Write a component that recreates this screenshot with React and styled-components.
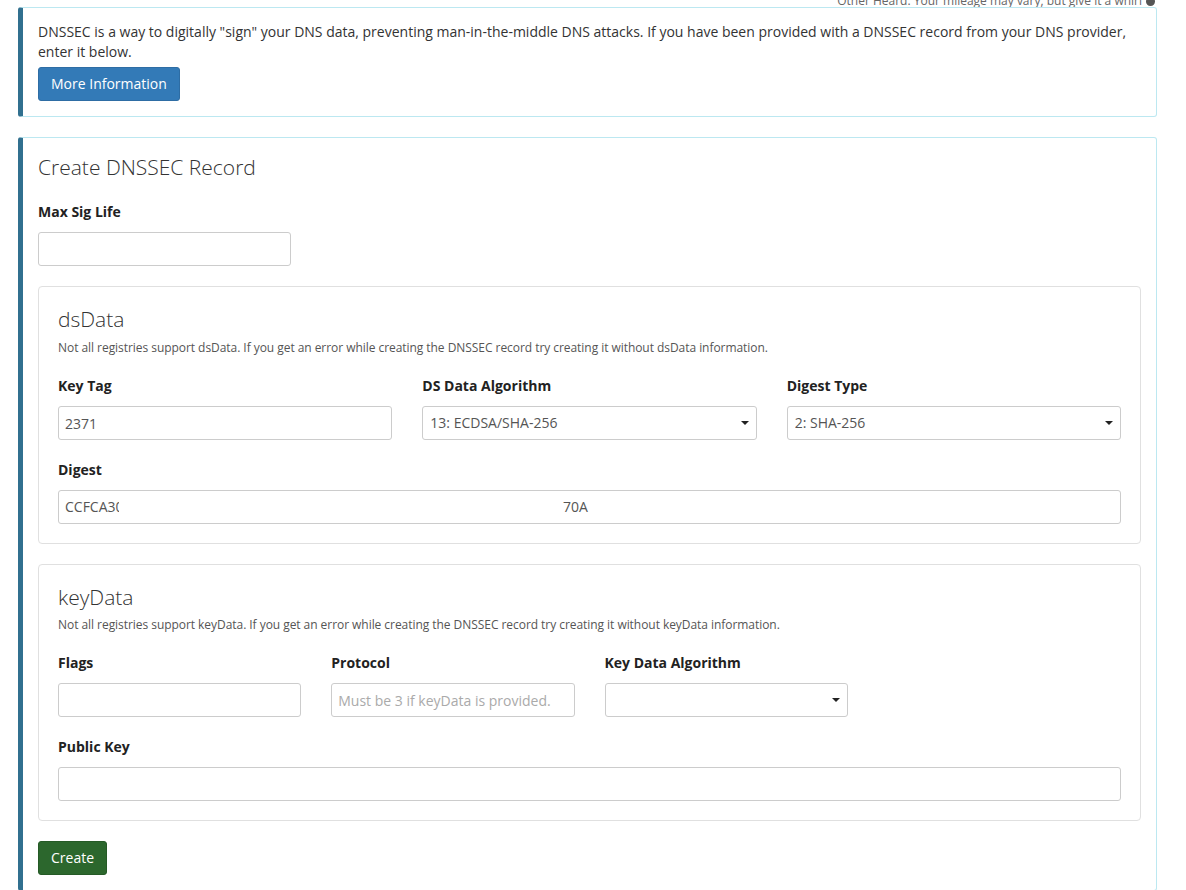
import React from "react";
import styled, { createGlobalStyle } from "styled-components";

const Global = createGlobalStyle`
  html, body { margin: 0; padding: 0; background: #fff; }
  body {
    font-family: "Open Sans", "Liberation Sans", Arial, sans-serif;
    font-size: 14px;
    line-height: 20px;
    color: #333;
  }
  * { box-sizing: border-box; }
`;

const Page = styled.div`
  padding: 0 29px 20px 18px;
`;

const TopLine = styled.div`
  height: 7px;
  overflow: hidden;
  display: flex;
  justify-content: flex-end;
  align-items: flex-end;
  padding-right: 2px;
`;

const TopNote = styled.span`
  font-size: 12px;
  line-height: 18px;
  color: #666;
  margin-bottom: -3px;
  display: inline-flex;
  align-items: center;
  gap: 4px;
`;

const Smile = styled.span`
  display: inline-block;
  width: 9px;
  height: 9px;
  border-radius: 50%;
  background: #555;
`;

const InfoPanel = styled.div`
  border: 1px solid #bce8f1;
  border-left: 5px solid #31708f;
  border-radius: 3px;
  padding: ${(p) => (p.$main ? "15px" : "14px 15px 15px")};
  margin-bottom: 20px;
  background: #fff;
`;

const Paragraph = styled.p`
  margin: 0 0 5px 0;
`;

const Button = styled.button`
  display: inline-block;
  font-family: inherit;
  font-size: 14px;
  line-height: 20px;
  padding: 6px 12px;
  border-radius: 3px;
  border: 1px solid ${(p) => (p.$variant === "success" ? "#255a26" : "#2e6da4")};
  background: ${(p) => (p.$variant === "success" ? "#2c672d" : "#337ab7")};
  color: #fff;
  cursor: pointer;
`;

const Title = styled.h3`
  margin: 0 0 21px 0;
  font-size: 21px;
  line-height: 28px;
  font-weight: 300;
  color: #333;
`;

const WellTitle = styled.h4`
  font-size: 21px;
  line-height: 26px;
  font-weight: 300;
  color: #333;
  margin: 0 0 ${(p) => (p.$tight ? "6px" : "7px")} 0;
`;

const Help = styled.p`
  margin: 0 0 20px 0;
  font-size: 12px;
  line-height: 17px;
  letter-spacing: -0.05px;
  color: #555;
`;

const Well = styled.div`
  border: 1px solid #e0e0e0;
  border-radius: 4px;
  padding: 19px;
  margin-bottom: 20px;
  background: #fff;
`;

const Grid = styled.div`
  display: grid;
  grid-template-columns: repeat(${(p) => p.$cols}, 1fr);
  column-gap: 30px;
  margin-bottom: ${(p) => (p.$last ? "0" : "20px")};
`;

const Field = styled.div`
  display: flex;
  flex-direction: column;
`;

const Label = styled.label`
  font-weight: 700;
  font-size: 14px;
  line-height: 20px;
  margin-bottom: 10px;
  color: #222;
`;

const inputBase = `
  height: 34px;
  width: 100%;
  border: 1px solid #ccc;
  border-radius: 3px;
  padding: 6px 6px;
  font-family: "Open Sans", "Liberation Sans", Arial, sans-serif;
  font-size: 14px;
  line-height: 20px;
  color: #555;
  background: #fff;
  outline: none;
`;

const Input = styled.input`
  ${inputBase}
  &::placeholder { color: #aaa; }
`;

const FakeInput = styled.div`
  ${inputBase}
  display: flex;
  align-items: center;
  white-space: nowrap;
  overflow: hidden;
`;

const Clip = styled.span`
  display: inline-block;
  width: ${(p) => p.$w}px;
  overflow: hidden;
  flex: none;
`;

const Tail = styled.span`
  margin-left: ${(p) => p.$gap}px;
`;

const SelectWrap = styled.div`
  position: relative;
  &::after {
    content: "";
    position: absolute;
    right: 8px;
    top: 15px;
    border-left: 4px solid transparent;
    border-right: 4px solid transparent;
    border-top: 4px solid #222;
    pointer-events: none;
  }
`;

const Select = styled.select`
  ${inputBase}
  padding: 6px 7px;
  appearance: none;
  -webkit-appearance: none;
`;

export default function App() {
  return (
    <>
      <Global />
      <Page>
        <TopLine>
          <TopNote>
            Other Heard. Your mileage may vary, but give it a whirl <Smile />
          </TopNote>
        </TopLine>
        <InfoPanel>
          <Paragraph>
            DNSSEC is a way to digitally "sign" your DNS data, preventing man-in-the-middle DNS attacks. If you have been provided with a DNSSEC record from your DNS provider, enter it below.
          </Paragraph>
          <Button type="button">More Information</Button>
        </InfoPanel>

        <InfoPanel $main>
          <Title>Create DNSSEC Record</Title>
          <Grid $cols={4}>
            <Field>
              <Label>Max Sig Life</Label>
              <Input type="text" />
            </Field>
          </Grid>

          <Well>
            <WellTitle>dsData</WellTitle>
            <Help>
              Not all registries support dsData. If you get an error while creating the DNSSEC record try creating it without dsData information.
            </Help>
            <Grid $cols={3}>
              <Field>
                <Label>Key Tag</Label>
                <Input type="text" defaultValue="2371" />
              </Field>
              <Field>
                <Label>DS Data Algorithm</Label>
                <SelectWrap>
                  <Select defaultValue="13">
                    <option value="13">13: ECDSA/SHA-256</option>
                  </Select>
                </SelectWrap>
              </Field>
              <Field>
                <Label>Digest Type</Label>
                <SelectWrap>
                  <Select defaultValue="2">
                    <option value="2">2: SHA-256</option>
                  </Select>
                </SelectWrap>
              </Field>
            </Grid>
            <Grid $cols={1} $last>
              <Field>
                <Label>Digest</Label>
                <FakeInput role="textbox">
                  <Clip $w={54}>CCFCA30</Clip>
                  <Tail $gap={444}>70A</Tail>
                </FakeInput>
              </Field>
            </Grid>
          </Well>

          <Well>
            <WellTitle $tight>keyData</WellTitle>
            <Help>
              Not all registries support keyData. If you get an error while creating the DNSSEC record try creating it without keyData information.
            </Help>
            <Grid $cols={4}>
              <Field>
                <Label>Flags</Label>
                <Input type="text" />
              </Field>
              <Field>
                <Label>Protocol</Label>
                <Input type="text" placeholder="Must be 3 if keyData is provided." />
              </Field>
              <Field>
                <Label>Key Data Algorithm</Label>
                <SelectWrap>
                  <Select defaultValue="">
                    <option value=""></option>
                  </Select>
                </SelectWrap>
              </Field>
            </Grid>
            <Grid $cols={1} $last>
              <Field>
                <Label>Public Key</Label>
                <Input type="text" />
              </Field>
            </Grid>
          </Well>

          <Button type="button" $variant="success">Create</Button>
        </InfoPanel>
      </Page>
    </>
  );
}
